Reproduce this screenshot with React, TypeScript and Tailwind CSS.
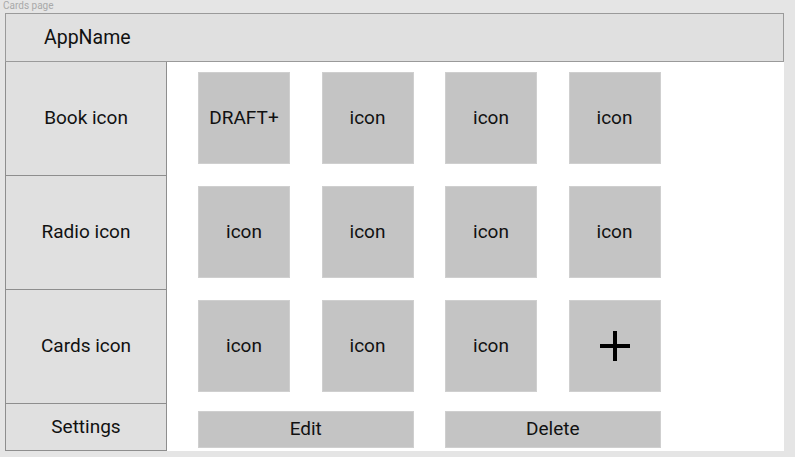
const navItems = ["Book icon", "Radio icon", "Cards icon"];

const cards = [
  "DRAFT+", "icon", "icon", "icon",
  "icon", "icon", "icon", "icon",
  "icon", "icon", "icon", "+",
];

export default function App() {
  return (
    <div className="w-[795px] h-[457px] bg-[#e5e5e5] font-['Roboto',sans-serif] text-[#111]">
      <div className="h-[13px] pl-[3px] text-[10px] leading-[11px] text-[#a9a9a9]">Cards page</div>

      <div className="ml-[5px] w-[779px] h-[438px] flex flex-col bg-white">
        {/* Header */}
        <div className="h-[49px] flex items-center pl-[38px] bg-[#e0e0e0] border border-[#9a9a9a] text-[19.5px]">
          AppName
        </div>

        <div className="flex flex-1">
          {/* Sidebar */}
          <div className="w-[162px] flex flex-col border-l border-r border-[#8e8e8e]">
            {navItems.map((label) => (
              <div
                key={label}
                className="h-[114px] flex items-center justify-center bg-[#e0e0e0] border-b border-[#8e8e8e] text-[19px]"
              >
                {label}
              </div>
            ))}
            <div className="flex-1 flex items-center justify-center bg-[#e0e0e0] border-b border-[#8e8e8e] text-[19px]">
              Settings
            </div>
          </div>

          {/* Cards */}
          <div className="pl-[31px] pt-[10px]">
            <div className="grid grid-cols-[92px_92px_92px_92px] gap-x-[31.5px] gap-y-[22px]">
              {cards.map((c, i) => (
                <div
                  key={i}
                  className="h-[92px] flex items-center justify-center bg-[#c4c4c4] border border-[#cfcfcf]"
                >
                  {c === "+" ? (
                    <svg width="30" height="30" viewBox="0 0 30 30">
                      <path d="M15 0v30M0 15h30" stroke="#000" strokeWidth="4" />
                    </svg>
                  ) : (
                    <span className="text-[19px]">{c}</span>
                  )}
                </div>
              ))}
            </div>
            <div className="mt-[19px] grid grid-cols-[215.5px_215.5px] gap-x-[31.5px]">
              <div className="h-[37px] flex items-center justify-center bg-[#c4c4c4] border border-[#cfcfcf] text-[19px]">
                Edit
              </div>
              <div className="h-[37px] flex items-center justify-center bg-[#c4c4c4] border border-[#cfcfcf] text-[19px]">
                Delete
              </div>
            </div>
          </div>
        </div>
      </div>
    </div>
  );
}
